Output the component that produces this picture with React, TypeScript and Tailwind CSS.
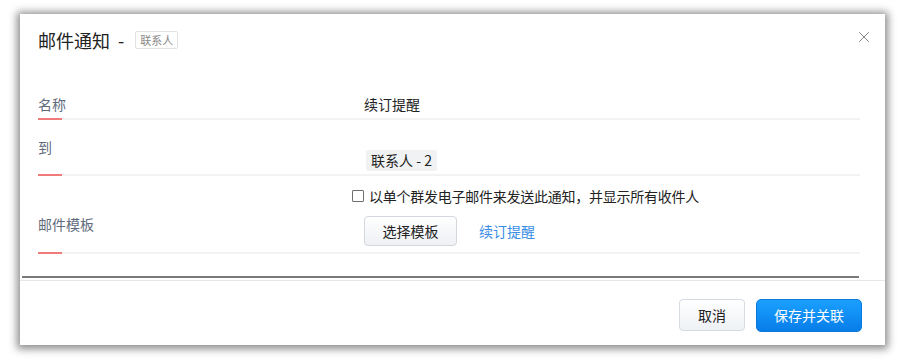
import { X } from "lucide-react";

const font = { fontFamily: '"Noto Sans CJK SC", "Noto Sans", sans-serif' };

function Label({ text, pt, h }: { text: string; pt: string; h: string }) {
  return (
    <div className={`w-[326px] shrink-0 flex flex-col justify-between ${h}`}>
      <div className={`${pt} text-[14px] leading-5 text-[#5f6b7c]`}>{text}</div>
      <div className="w-[24px] h-[2px] bg-[#ef7b7b]" />
    </div>
  );
}

export default function App() {
  return (
    <div className="w-[905px] h-[359px] bg-white pt-[14px] pl-[20px]" style={font}>
      <div className="w-[865px] h-[331px] bg-white shadow-[0_1px_8px_3px_rgba(0,0,0,0.45)] flex flex-col">
        <div className="h-[76px] pl-[18px] pr-[12px] pt-[13px] flex items-start justify-between">
          <div className="flex items-center gap-[8px]">
            <span className="text-[18px] leading-[26px] text-[#222]">邮件通知</span>
            <span className="text-[18px] leading-[26px] text-[#222]">-</span>
            <span className="ml-[3px] px-[4px] h-[18px] flex items-center text-[11px] text-[#888] border border-[#e2e2e2] rounded-[2px]">联系人</span>
          </div>
          <X size={18} strokeWidth={1.2} className="text-[#777] mt-[1px]" />
        </div>

        <div className="pl-[18px] pr-[25px]">
          <div className="flex h-[30px] border-b-2 border-[#f3f3f3]">
            <Label text="名称" pt="pt-[4px]" h="h-[30px]" />
            <div className="pt-[4px] text-[14px] leading-5 text-[#222]">续订提醒</div>
          </div>

          <div className="flex h-[56px] border-b-2 border-[#f3f3f3]">
            <Label text="到" pt="pt-[17px]" h="h-[56px]" />
            <div className="pt-[27px] pl-[2px]">
              <span className="inline-block px-[5px] h-[21px] leading-[21px] text-[14px] text-[#222] bg-[#f1f2f3] rounded-[2px]">联系人 - 2</span>
            </div>
          </div>

          <div className="flex h-[78px] border-b-2 border-[#f3f3f3]">
            <Label text="邮件模板" pt="pt-[38px]" h="h-[78px]" />
            <div className="pt-[10px] -ml-[12px] flex flex-col">
              <label className="flex items-center gap-[5px] text-[14px] leading-5 text-[#222] tracking-[-0.25px]">
                <span className="w-[12px] h-[12px] border border-[#6e6e6e] rounded-[1px] bg-white" />
                以单个群发电子邮件来发送此通知，并显示所有收件人
              </label>
              <div className="mt-[10px] ml-[12px] flex items-center gap-[22px]">
                <button className="w-[93px] h-[30px] rounded-[4px] border border-[#d3d7de] bg-gradient-to-b from-white to-[#eef0f4] text-[14px] text-[#222]">选择模板</button>
                <span className="text-[14px] text-[#3a8ee6]">续订提醒</span>
              </div>
            </div>
          </div>
        </div>

        <div className="mt-[22px] ml-[2px] mr-[26px] h-[2px] bg-[#7a7a7a]" />
        <div className="mt-[2px] h-px bg-[#e6e6e6]" />

        <div className="flex justify-end gap-[11px] pr-[23px] pt-[18px]">
          <button className="w-[66px] h-[32px] rounded-[4px] border border-[#d6dbe2] bg-gradient-to-b from-white to-[#eef1f5] text-[14px] text-[#222]">取消</button>
          <button className="w-[106px] h-[33px] rounded-[5px] bg-gradient-to-b from-[#1aa0ff] to-[#087de9] border border-[#0a78dd] text-[14px] text-white">保存并关联</button>
        </div>
      </div>
    </div>
  );
}
